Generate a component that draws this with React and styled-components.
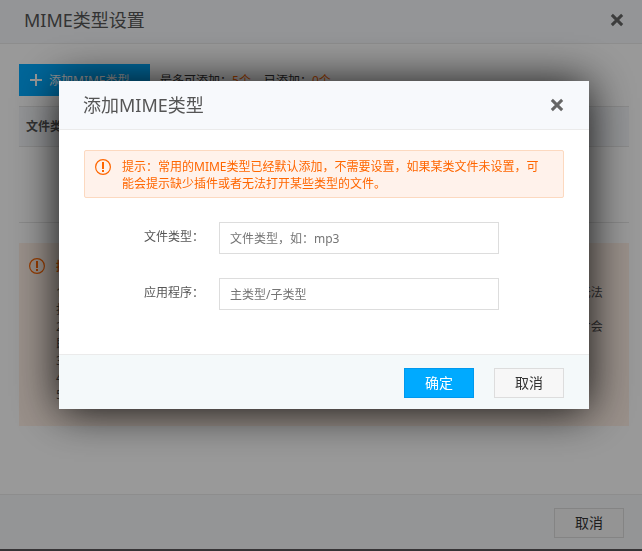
import React from 'react'
import styled, { createGlobalStyle, css } from 'styled-components'

const tips = [
  '1\u3001如果您的网站中存在服务器默认没有设置的文件类型\uff0c访问者在浏览器中打开该类文件时可能会无法打开或者直接显示乱码的情况。',
  '2\u3001文件类型请填写扩展名\uff0c应用程序请填写主类型和子类型\uff0c设置完成后重新访问该文件时浏览器才会即时使用新的设置。',
  '3\u3001同一个文件类型只能设置一个应用程序。',
  '4\u3001设置后不需要重启网站。',
  '5\u3001最多可以添加五个类型。',
]

function CloseIcon() {
  return (
    <svg width="14" height="14" viewBox="0 0 14 14" fill="none" stroke="currentColor" strokeWidth="3" strokeLinecap="square">
      <path d="M2.9 2.9 11.1 11.1M11.1 2.9 2.9 11.1" />
    </svg>
  )
}

function WarnIcon() {
  return (
    <svg width="16" height="16" viewBox="0 0 16 16" fill="none" stroke="#ff6600">
      <circle cx="8" cy="8" r="7.4" strokeWidth="1.2" />
      <path d="M8 3V10M8 11V13" strokeWidth="2" />
    </svg>
  )
}

function PlusIcon() {
  return (
    <svg width="12" height="12" viewBox="0 0 12 12" stroke="#fff" strokeWidth="2">
      <path d="M6 0V12M0 6H12" />
    </svg>
  )
}

function AddDialog() {
  return (
    <Dialog role="dialog" aria-modal="true" aria-labelledby="add-title">
      <DialogHeader>
        <h2 id="add-title">添加MIME类型</h2>
        <CloseButton type="button" aria-label="关闭"><CloseIcon /></CloseButton>
      </DialogHeader>
      <DialogBody>
        <Notice>
          <WarnIcon />
          <p>{'提示\uff1a常用的MIME类型已经默认添加\uff0c不需要设置\uff0c如果某类文件未设置\uff0c可能会提示缺少插件或者无法打开某些类型的文件。'}</p>
        </Notice>
        <Form>
          <Field>
            <label htmlFor="ext">{'文件类型\uff1a'}</label>
            <input id="ext" type="text" placeholder={'文件类型\uff0c如\uff1amp3'} />
          </Field>
          <Field>
            <label htmlFor="app">{'应用程序\uff1a'}</label>
            <input id="app" type="text" placeholder="主类型/子类型" />
          </Field>
        </Form>
      </DialogBody>
      <Footer $tint="#f4f9fa">
        <Button type="button" $primary>确定</Button>
        <Button type="button">取消</Button>
      </Footer>
    </Dialog>
  )
}

function App() {
  return (
    <>
      <GlobalStyle />
      <Page>
        <PageHeader>
          <h1>MIME类型设置</h1>
          <CloseButton type="button" aria-label="关闭"><CloseIcon /></CloseButton>
        </PageHeader>
        <PageBody>
          <Toolbar>
            <AddButton type="button"><PlusIcon />添加MIME类型</AddButton>
            <span>{'最多可添加\uff1a'}<em>5个</em></span>
            <span>{'已添加\uff1a'}<em>0个</em></span>
          </Toolbar>
          <TypeTable>
            <thead>
              <tr><th>文件类型</th><th>应用程序</th></tr>
            </thead>
            <tbody>
              <tr><td colSpan="2" /></tr>
            </tbody>
          </TypeTable>
          <Help>
            <WarnIcon />
            <div>
              <h3>{'提示\uff1a'}</h3>
              {tips.map((tip) => <p key={tip}>{tip}</p>)}
            </div>
          </Help>
        </PageBody>
        <Footer $tint="#f7f8fb">
          <Button type="button">取消</Button>
        </Footer>
      </Page>
      <Overlay>
        <AddDialog />
      </Overlay>
    </>
  )
}

const GlobalStyle = createGlobalStyle`
    *{
        box-sizing: border-box;
        margin: 0;
        padding: 0;
    }
    body{
        background: #5a575a;
        color: #555;
    }
    body, button, input{
        font-family: "Noto Sans", "Noto Sans CJK SC", sans-serif;
        font-size: 12px;
        line-height: 17px;
    }
`;

const Page = styled.div`
    background: #fff;
`;

const header = css`
    display: flex;
    align-items: center;
    justify-content: space-between;
    background: #f7f9fc;
    border-bottom: 1px solid #ebebeb;
    h1, h2{
        font-size: 18px;
        line-height: 24px;
        font-weight: 400;
        color: #555;
    }
`;

const PageHeader = styled.header`
    ${header}
    height: 44px;
    padding: 0 18px 4px 24px;
`;

const DialogHeader = styled.header`
    ${header}
    height: 49px;
    padding: 0 25px 0 24px;
`;

const CloseButton = styled.button`
    display: flex;
    border: 0;
    background: none;
    color: #666;
    cursor: pointer;
`;

const PageBody = styled.main`
    padding: 20px 13px 68px 19px;
`;

const Toolbar = styled.div`
    display: flex;
    align-items: center;
    margin-bottom: 10px;
    span{
        margin-left: 10px;
        color: #333;
    }
    span + span{
        margin-left: 13px;
    }
    em{
        font-style: normal;
        color: #ff6600;
    }
`;

const AddButton = styled.button`
    display: flex;
    align-items: center;
    gap: 7px;
    width: 131px;
    height: 32px;
    padding-left: 11px;
    border: 0;
    background: #00aaff;
    color: #fff;
    white-space: nowrap;
    cursor: pointer;
`;

const TypeTable = styled.table`
    width: 100%;
    border-collapse: separate;
    border-spacing: 0;
    margin-bottom: 20px;
    th{
        height: 41px;
        padding-left: 7px;
        border: solid #e5e5e5;
        border-width: 1px 0;
        background: #f5f7fa;
        color: #555;
        text-align: left;
        font-weight: 700;
    }
    td{
        height: 76px;
        border-bottom: 1px solid #e5e5e5;
    }
`;

const Help = styled.section`
    display: flex;
    gap: 11px;
    padding: 15px 23px 23px 10px;
    background: #fff0e6;
    svg{
        flex: none;
    }
    h3{
        margin-bottom: 9px;
        font-size: 12px;
        color: #ff6600;
    }
`;

const Footer = styled.footer`
    display: flex;
    justify-content: flex-end;
    gap: 20px;
    height: 55px;
    padding: 13px 25px 0;
    border-top: 1px solid #ebebeb;
    background: ${(props) => props.$tint};
    ${Page} > &{
        padding-right: 18px;
    }
`;

const Button = styled.button`
    width: 70px;
    height: 30px;
    border: 1px solid ${(props) => (props.$primary ? '#0099ee' : '#dddddd')};
    background: ${(props) => (props.$primary ? '#00aaff' : '#f7f7f7')};
    color: ${(props) => (props.$primary ? '#fff' : '#333')};
    font-size: 14px;
    line-height: 20px;
    cursor: pointer;
`;

const Overlay = styled.div`
    position: fixed;
    inset: 0;
    display: flex;
    align-items: flex-start;
    justify-content: center;
    padding: 81px 53px 0 59px;
    background: rgba(0, 0, 0, 0.4);
`;

const Dialog = styled.div`
    width: 100%;
    background: #fff;
    box-shadow: 0 2px 42px rgba(0, 0, 0, 0.9);
`;

const DialogBody = styled.div`
    padding: 20px 25px 44px;
`;

const Notice = styled.div`
    display: flex;
    gap: 11px;
    padding: 7px 20px 5px 10px;
    border: 1px solid #fcd9c0;
    border-radius: 2px;
    background: #fff2eb;
    color: #ff6600;
    svg{
        flex: none;
        margin-top: 1px;
    }
`;

const Form = styled.form`
    display: grid;
    gap: 24px;
    margin-top: 24px;
    padding-left: 60px;
`;

const Field = styled.div`
    display: flex;
    label{
        flex: none;
        width: 75px;
        line-height: 30px;
    }
    input{
        width: 280px;
        height: 32px;
        padding: 0 10px;
        border: 1px solid #dddddd;
        background: #fff;
        color: #555;
        outline: none;
    }
    input::placeholder{
        color: #757575;
        opacity: 1;
    }
`;

export default App
